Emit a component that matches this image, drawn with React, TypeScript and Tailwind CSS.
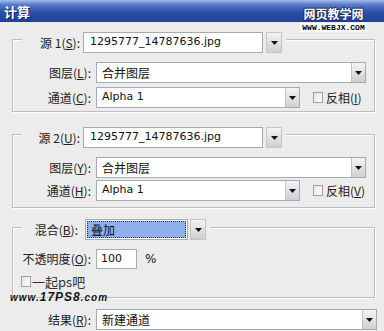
import React from 'react';

const cjk = { fontFamily: '"Noto Sans CJK SC", "DejaVu Sans", sans-serif' };
const latin = { fontFamily: '"DejaVu Sans", "Noto Sans CJK SC", sans-serif' };

function Arrow() {
  return (
    <div className="flex h-full w-full items-center justify-center">
      <svg width="7" height="4" viewBox="0 0 7 4">
        <path d="M0 0h7L3.5 4z" fill="#111" />
      </svg>
    </div>
  );
}

function DropButton({ className = '' }: { className?: string }) {
  return (
    <div
      className={`shrink-0 border border-[#c4c4c4] bg-gradient-to-b from-[#f4f4f4] to-[#cfcfcf] ${className}`}
    >
      <Arrow />
    </div>
  );
}

function Label({ text, keyChar, w }: { text: string; keyChar: string; w: string }) {
  return (
    <div className={`${w} shrink-0 text-right text-[12px] leading-none text-[#222]`} style={cjk}>
      {text}(<span className="underline">{keyChar}</span>):
    </div>
  );
}

function Select({ value, w, zh = false }: { value: string; w: string; zh?: boolean }) {
  return (
    <div className={`${w} flex h-[21px] items-stretch border border-[#a5abb4] bg-white`}>
      <div
        className={`flex flex-1 items-center pl-[5px] text-[#111] ${zh ? 'text-[12px]' : 'text-[11px]'}`}
        style={zh ? cjk : latin}
      >
        {value}
      </div>
      <DropButton className="w-[14px] border-y-0 border-r-0" />
    </div>
  );
}

function Check({ text, keyChar }: { text: string; keyChar: string }) {
  return (
    <div className="flex items-center gap-[3px]">
      <div className="h-[11px] w-[10px] border border-[#a0a0a0] bg-gradient-to-br from-[#e4e4e4] to-white" />
      <span className="text-[12px] leading-none text-[#222]" style={cjk}>
        {text}(<span className="underline">{keyChar}</span>)
      </span>
    </div>
  );
}

function SourceGroup({
  n,
  k,
  layerKey,
  chanKey,
  invKey,
  rowGaps,
}: {
  n: string;
  k: string;
  layerKey: string;
  chanKey: string;
  invKey: string;
  rowGaps: [string, string, string];
}) {
  return (
    <div className="ml-[12px] w-[363px] border border-[#bdbdca] shadow-[1px_1px_0_#fff,inset_1px_1px_0_#fff]">
      {/* legend row sits on the top border */}
      <div className="-mt-[8px] ml-[9px] flex w-fit items-center gap-[3px] bg-[#ececec] pl-[3px] pr-[4px]">
        <Label text={`源 ${n}`} keyChar={k} w="w-[55px]" />
        <div className="flex h-[21px] w-[180px] items-center border border-[#a5abb4] bg-white pl-[6px] text-[11px] text-[#111]" style={latin}>
          1295777_14787636.jpg
        </div>
        <DropButton className="h-[21px] w-[16px]" />
      </div>
      <div className={`${rowGaps[0]} flex items-center gap-[5px]`}>
        <Label text="图层" keyChar={layerKey} w="w-[78px]" />
        <Select value="合并图层" w="w-[270px]" zh />
      </div>
      <div className={`${rowGaps[1]} flex items-center gap-[5px] ${rowGaps[2]}`}>
        <Label text="通道" keyChar={chanKey} w="w-[78px]" />
        <Select value="Alpha 1" w="w-[204px]" />
        <div className="ml-[8px]">
          <Check text="反相" keyChar={invKey} />
        </div>
      </div>
    </div>
  );
}

export default function App() {
  return (
    <div className="relative h-[331px] w-[384px] overflow-hidden bg-[#ececec]">
      {/* title bar */}
      <div className="flex h-[22px] items-center bg-[linear-gradient(180deg,#a3bdea_0%,#5679c8_22%,#2d4fa6_55%,#1f4096_100%)] pl-[4px]">
        <span className="text-[13px] font-bold leading-none text-white [text-shadow:1px_1px_0_#0c2160]" style={cjk}>
          计算
        </span>
      </div>

      {/* watermark over the title bar */}
      <div className="absolute left-[300px] top-[7px] flex w-[67px] flex-col items-center">
        <span
          className="text-[12px] font-bold leading-[14px] text-white [text-shadow:0_0_1px_#1c2d66,1px_0_0_#1c2d66,-1px_0_0_#1c2d66,0_1px_0_#1c2d66,0_-1px_0_#1c2d66]"
          style={cjk}
        >
          网页教学网
        </span>
        <span
          className="mt-[2px] bg-white px-[2px] text-[8px] font-bold leading-[9px] text-black"
          style={{ fontFamily: '"Liberation Mono", monospace' }}
        >
          WWW.WEBJX.COM
        </span>
      </div>

      <div className="mt-[17px] flex flex-col">
        <SourceGroup
          n="1"
          k="S"
          layerKey="L"
          chanKey="C"
          invKey="I"
          rowGaps={['mt-[9px]', 'mt-[4px]', 'mb-[3px]']}
        />

        <div className="mt-[22px]">
          <SourceGroup
            n="2"
            k="U"
            layerKey="Y"
            chanKey="H"
            invKey="V"
            rowGaps={['mt-[9px]', 'mt-[2px]', 'mb-[6px]']}
          />
        </div>

        {/* blend group */}
        <div className="relative ml-[12px] mt-[19px] w-[363px] border border-[#bdbdca] shadow-[1px_1px_0_#fff,inset_1px_1px_0_#fff]">
          <div className="-mt-[9px] ml-[9px] flex w-fit items-center bg-[#ececec] pl-[3px] pr-[4px]">
            <Label text="混合" keyChar="B" w="w-[53px]" />
            <div className="ml-[7px] flex h-[21px] w-[103px] items-center border border-[#a5abb4] bg-white p-[1px]">
              <div className="flex h-full w-full items-center border border-dotted border-[#333] bg-[#8fb0ea] pl-[3px] text-[12px] text-[#111]" style={cjk}>
                叠加
              </div>
            </div>
            <DropButton className="ml-[2px] h-[21px] w-[16px]" />
          </div>
          <div className="mt-[9px] flex items-center gap-[5px]">
            <Label text="不透明度" keyChar="O" w="w-[78px]" />
            <div className="flex h-[20px] w-[41px] items-center border border-[#a5abb4] bg-white pl-[4px] text-[11px] text-[#111]" style={latin}>
              100
            </div>
            <span className="ml-[3px] text-[12px] text-[#111]" style={latin}>
              %
            </span>
          </div>
          <div className="mb-[10px] ml-[8px] mt-[6px] flex h-[12px] items-center gap-[1px]">
            <div className="h-[11px] w-[10px] border border-[#a0a0a0] bg-gradient-to-br from-[#e4e4e4] to-white" />
            <span className="text-[13px] leading-none text-[#333]" style={cjk}>
              一起ps吧
            </span>
          </div>
          {/* site watermark */}
          <span
            className="absolute left-[-3px] top-[63px] text-[10px] font-bold italic leading-none tracking-[1px] text-[#111] [text-shadow:0_0_1px_#fff]"
            style={{ fontFamily: '"Liberation Sans", sans-serif' }}
          >
            www.<span className="text-[12px] font-black">17PS8</span>.com
          </span>
        </div>

        <div className="mt-[11px] flex items-center gap-[5px]">
          <Label text="结果" keyChar="R" w="w-[91px]" />
          <Select value="新建通道" w="w-[281px]" zh />
        </div>
      </div>
    </div>
  );
}
